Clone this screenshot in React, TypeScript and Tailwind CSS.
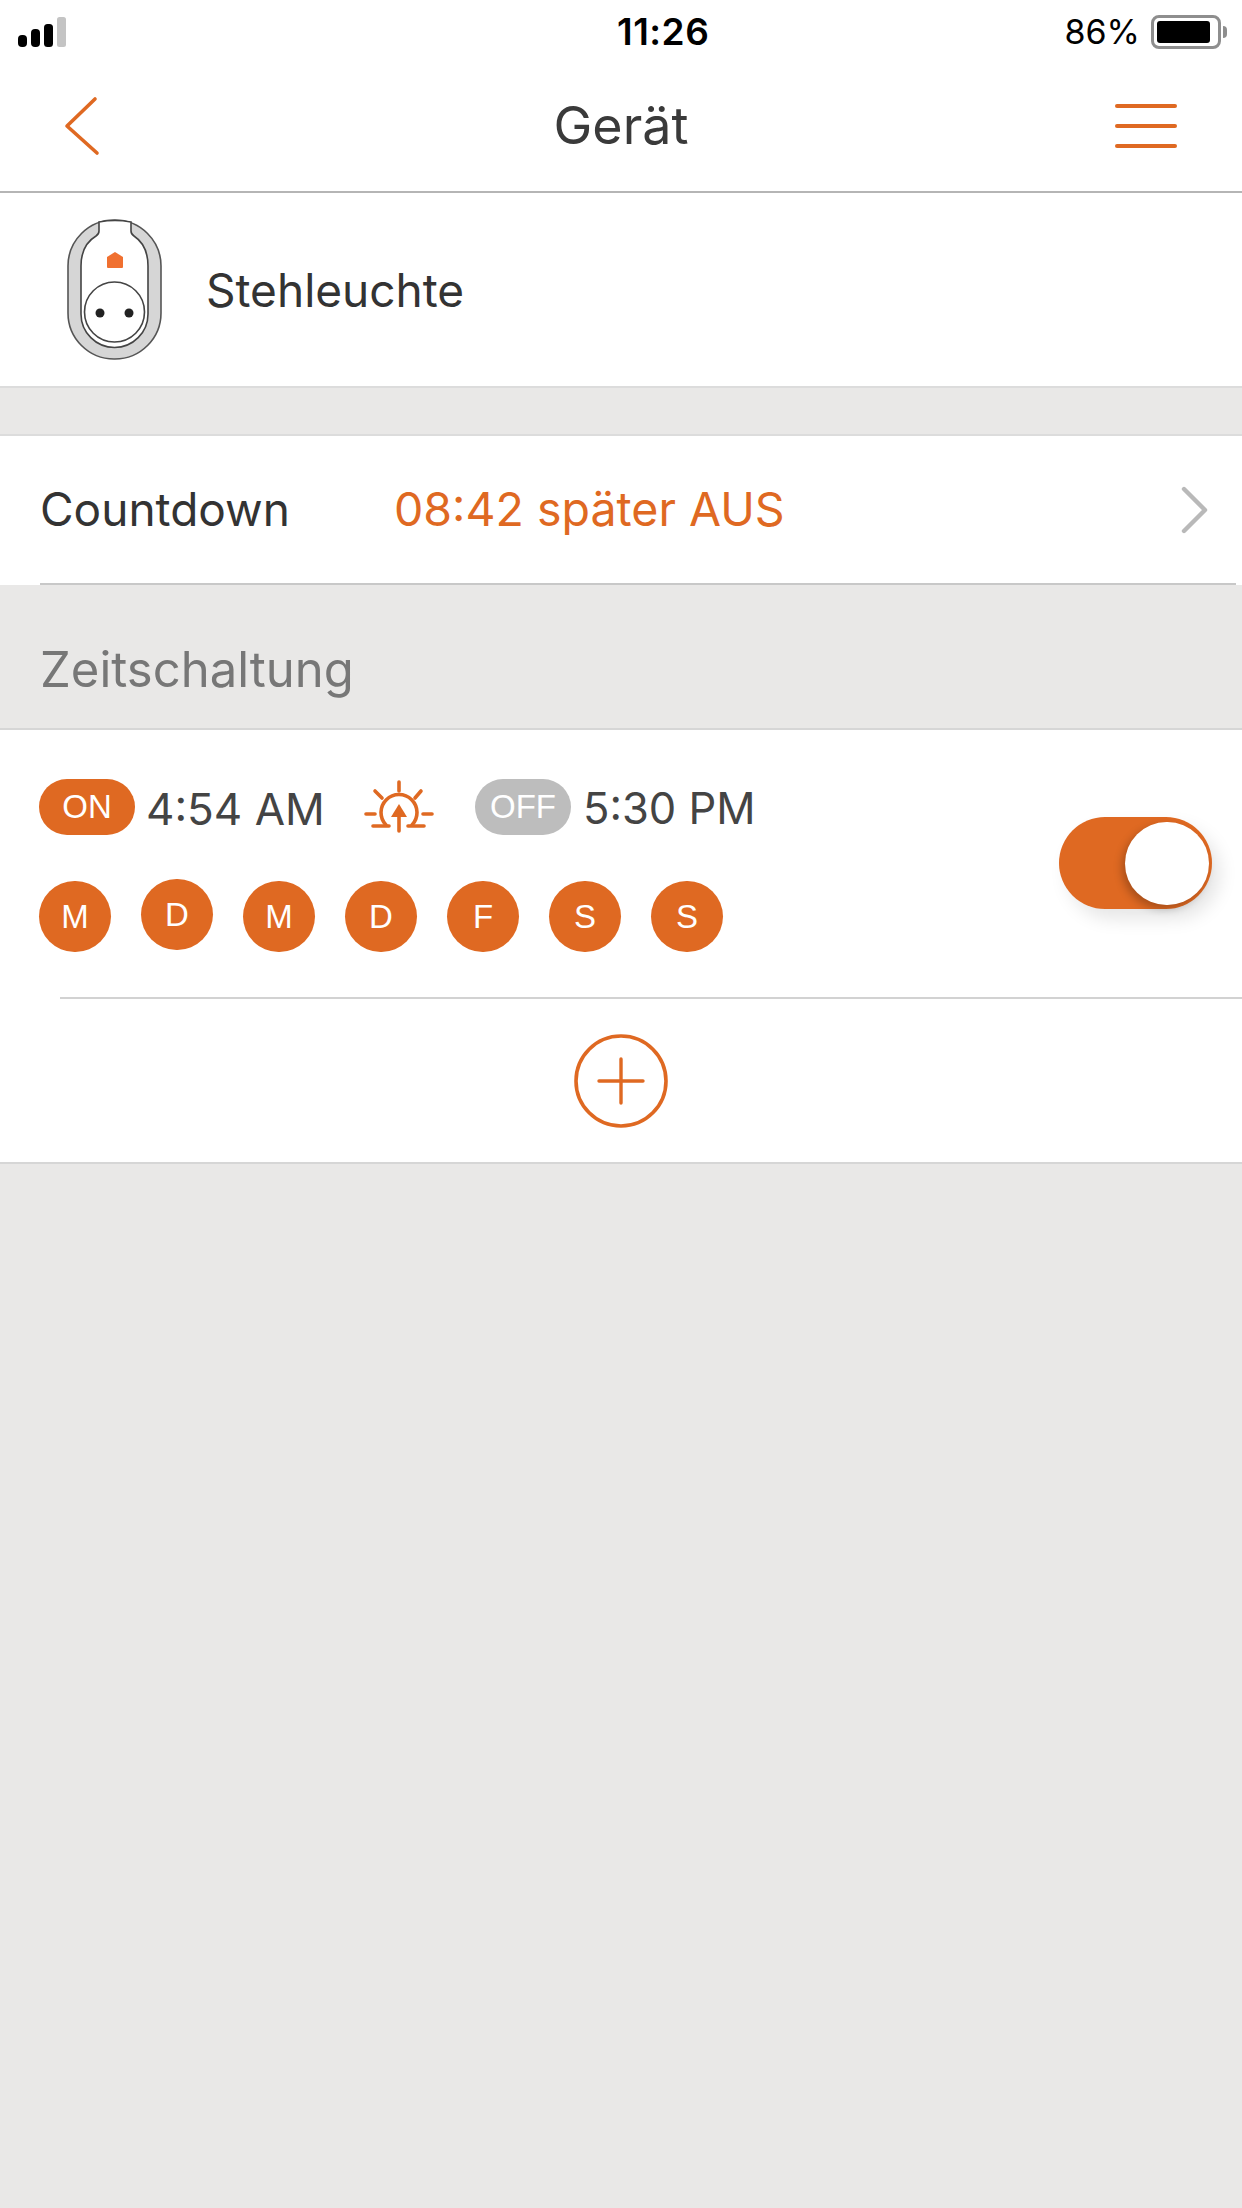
const sans = "font-['Liberation_Sans',Arial,sans-serif]"
const inter = "font-['Inter',sans-serif]"

const days = ["M", "D", "M", "D", "F", "S", "S"]

function SignalBars() {
  return (
    <svg width="48" height="30" viewBox="0 0 48 30">
      <rect x="0" y="18" width="9" height="12" rx="4" fill="#000" />
      <rect x="13" y="12" width="9" height="18" rx="4" fill="#000" />
      <rect x="26" y="7" width="9" height="23" rx="3.5" fill="#000" />
      <rect x="39" y="0" width="9" height="30" rx="2.5" fill="#c4c4c4" />
    </svg>
  )
}

function StatusBar() {
  return (
    <div className="relative flex h-[63px] items-center justify-between bg-white pl-[18px] pr-[15px]">
      <SignalBars />
      <span className={`absolute left-[617px] top-[10px] text-[37px] font-semibold leading-[44px] tracking-[0.5px] text-black ${inter}`}>
        11:26
      </span>
      <div className="flex items-center gap-[11px]">
        <span className={`text-[34px] leading-[44px] text-black ${inter}`}>86%</span>
        <div className="flex items-center gap-[2px]">
          <div className="h-[34px] w-[70px] rounded-[8px] border-[3px] border-[#8e8e8e] p-[3px]">
            <div className="h-full w-[53px] rounded-[3px] bg-black" />
          </div>
          <span className="h-[12px] w-[4px] rounded-r-full bg-[#8e8e8e]" />
        </div>
      </div>
    </div>
  )
}

function NavBar() {
  return (
    <div className="relative flex h-[130px] items-center justify-between border-b-2 border-[#b5b5b5] bg-white pb-[3px] pl-[64px] pr-[65px]">
      <svg width="36" height="60" viewBox="0 0 36 60" fill="none" stroke="#df6922" strokeWidth="3.6" strokeLinecap="round" strokeLinejoin="round">
        <path d="M31 3 L3 30 L33 57" />
      </svg>
      <span className={`absolute inset-x-0 text-center text-[52px] leading-[60px] text-[#3a3a3a] ${inter}`}>Gerät</span>
      <div className="flex w-[62px] flex-col gap-[16px]">
        <span className="h-[4px] rounded-full bg-[#df6922]" />
        <span className="h-[4px] rounded-full bg-[#df6922]" />
        <span className="h-[4px] rounded-full bg-[#df6922]" />
      </div>
    </div>
  )
}

function PlugIcon() {
  return (
    <svg width="95" height="141" viewBox="-1 -1 95 141" fill="none">
      <rect x="0" y="0" width="93" height="139" rx="46" fill="#d6d6d6" stroke="#555" strokeWidth="1.6" />
      {/* inner opening runs up into the tab at the top edge */}
      <path
        d="M31 2 Q47 -1 63 2 V11 Q63 14 66 16 C75 22 80 33 80 46 V94 A33.5 33.5 0 0 1 13 94 V46 C13 33 18 22 28 16 Q31 14 31 11 Z"
        fill="#fff"
        stroke="#444"
        strokeWidth="1.6"
      />
      <circle cx="46.5" cy="92" r="30" stroke="#444" strokeWidth="1.6" fill="#fff" />
      <circle cx="32" cy="93" r="4.5" fill="#222" />
      <circle cx="61" cy="93" r="4.5" fill="#222" />
      <path d="M39 37 L47 32 L55 37 V47 Q55 48 54 48 H40 Q39 48 39 47 Z" fill="#f07030" />
    </svg>
  )
}

function DeviceRow() {
  return (
    <div className="flex h-[195px] items-center gap-[44px] border-b-2 border-[#dcdcdc] bg-white pl-[67px]">
      <PlugIcon />
      <span className={`text-[46px] leading-[56px] text-[#333] ${inter}`}>Stehleuchte</span>
    </div>
  )
}

function CountdownRow() {
  return (
    <div className="mt-[46px] border-t-2 border-[#dcdcdc] bg-white pl-[40px] pr-[6px]">
      <div className="flex h-[149px] items-center border-b-2 border-[#c8c8c8] pr-[28px]">
        <span className={`w-[354px] text-[46px] text-[#333] ${inter}`}>Countdown</span>
        <span className={`flex-1 text-[46.5px] text-[#df6922] ${inter}`}>08:42 später AUS</span>
        <svg width="28" height="48" viewBox="0 0 28 48" fill="none" stroke="#b9b9b9" strokeWidth="4.4" strokeLinecap="round" strokeLinejoin="round">
          <path d="M4 3 L25 24 L4 45" />
        </svg>
      </div>
    </div>
  )
}

function SunriseIcon() {
  return (
    <svg width="70" height="54" viewBox="24 20 70 54" fill="none" stroke="#df6922" strokeWidth="3.6" strokeLinecap="round">
      <path d="M59 22 V31" />
      <path d="M35 31 L42 38" />
      <path d="M81 31 L75 38" />
      <path d="M26 54 H35" />
      <path d="M83 54 H92" />
      <path d="M46 65 A18 18 0 1 1 72 65" />
      <path d="M33 66 H49" />
      <path d="M68 66 H84" />
      <path d="M59 56 V71" />
      <path d="M59 44 L51 57 H67 Z" fill="#df6922" stroke="none" />
    </svg>
  )
}

function StatePill({ label, on }: { label: string; on: boolean }) {
  return (
    <span
      className={`flex h-[56px] w-[96px] items-center justify-center rounded-full text-[33px] leading-[56px] text-white ${sans} ${
        on ? "bg-[#df6922]" : "bg-[#bdbdbd]"
      }`}
    >
      {label}
    </span>
  )
}

function ScheduleRow() {
  return (
    <div className="relative h-[267px] pl-[39px] pt-[49px]">
      <div className={`flex h-[56px] items-center text-[44px] text-[#444] ${inter}`}>
        <StatePill label="ON" on />
        <span className="ml-[11px] w-[218px] pt-[4px]">4:54 AM</span>
        <SunriseIcon />
        <span className="ml-[41px]">
          <StatePill label="OFF" on={false} />
        </span>
        <span className="ml-[12px] pt-[4px] text-[43.5px]">5:30 PM</span>
      </div>
      <div className="mt-[46px] flex gap-[30px]">
        {days.map((day, i) => (
          <span
            key={i}
            className={`flex h-[71px] w-[72px] items-center justify-center rounded-full bg-[#df6922] text-[33px] text-white ${sans} ${
              i === 1 ? "-translate-y-[2px]" : ""
            }`}
          >
            {day}
          </span>
        ))}
      </div>
      {/* toggle, knob sits at the right end */}
      <div className="absolute left-[1059px] top-[87px] h-[92px] w-[153px] rounded-full bg-[#df6922] shadow-[8px_10px_18px_rgba(0,0,0,0.1)]">
        <span className="absolute right-[3px] top-[5px] h-[83px] w-[84px] rounded-full bg-white shadow-[-3px_4px_8px_rgba(0,0,0,0.25)]" />
      </div>
    </div>
  )
}

function AddRow() {
  return (
    <div className="ml-[60px] flex h-[165px] items-center justify-center border-t-2 border-[#d2d2d2]">
      <svg className="-ml-[60px]" width="94" height="94" viewBox="0 0 94 94" fill="none" stroke="#df6922" strokeLinecap="round">
        <circle cx="47" cy="47" r="45" strokeWidth="3.6" />
        <path d="M25 47 H69 M47 25 V69" strokeWidth="3.4" />
      </svg>
    </div>
  )
}

export default function App() {
  return (
    <div className="flex min-h-[2208px] flex-col bg-[#e9e8e7]">
      <StatusBar />
      <NavBar />
      <DeviceRow />
      <CountdownRow />
      <div className={`h-[145px] border-b-2 border-[#d6d6d6] pl-[40px] pt-[57px] text-[49px] leading-[56px] text-[#777] ${inter}`}>
        Zeitschaltung
      </div>
      <div className="border-b-2 border-[#d6d6d6] bg-white">
        <ScheduleRow />
        <AddRow />
      </div>
    </div>
  )
}
